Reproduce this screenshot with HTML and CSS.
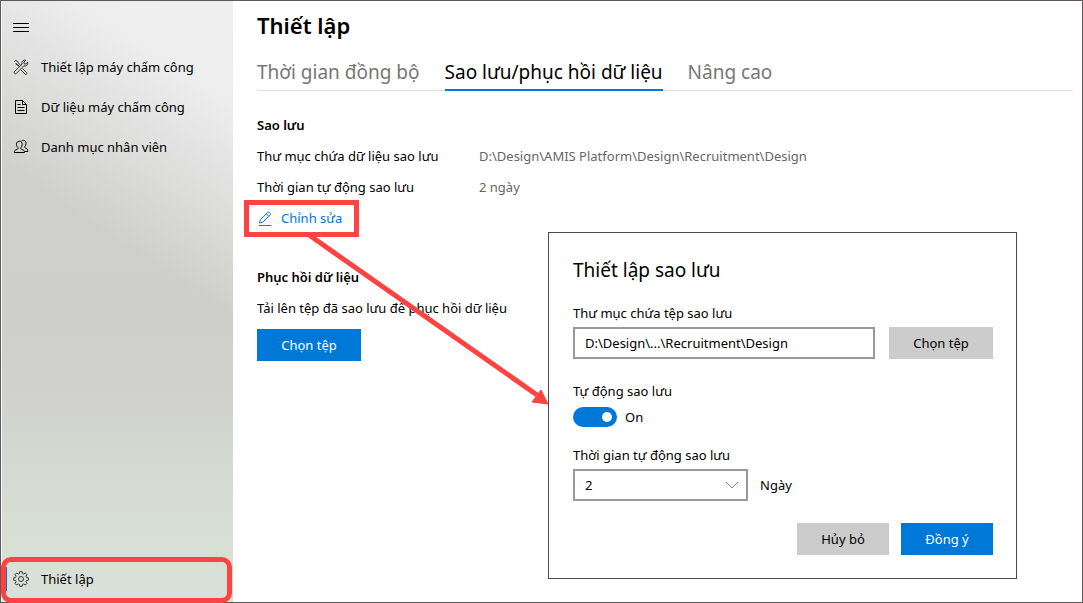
FILE: index.html
```html
<!DOCTYPE html>
<html lang="vi">
<head>
  <meta charset="UTF-8">
  <meta name="viewport" content="width=device-width, initial-scale=1.0">
  <title>Thiết lập</title>
  <link rel="stylesheet" href="styles.css">
</head>
<body>
  <div class="window">
    <aside class="sidebar">
      <button class="menu-btn" type="button" aria-label="Menu">
        <svg class="icon" viewBox="0 0 16 16"><path d="M0 4.5h16M0 8.5h16M0 12.5h16"/></svg>
      </button>
      <nav class="side-nav">
        <a class="side-link" href="#">
          <svg class="icon thin" viewBox="0 0 16 16">
            <path d="M1.3 2.8 2.7 1.4 5 2.7l.3 1.2 2.6 2.6M6.7 7.6 4 5 2.7 4.8z"/>
            <path d="M9.3 9.4 13.6 13.7a1 1 0 0 1-1.5 1.5L7.9 10.9"/>
            <path d="M14.7 3.2a3 3 0 0 1-3.9 3.7L3.4 14.4a1.3 1.3 0 0 1-1.9-1.9L9 5.1a3 3 0 0 1 3.7-3.9L11 3v1.9h1.9z"/>
          </svg>
          Thiết lập máy chấm công
        </a>
        <a class="side-link" href="#">
          <svg class="icon" viewBox="0 0 16 16">
            <path d="M2.5 1.5h7l4 4v9h-11zM9.5 1.5v4h4M4.5 5.5h3M4.5 8.5h7M4.5 11.5h7"/>
          </svg>
          Dữ liệu máy chấm công
        </a>
        <a class="side-link" href="#">
          <svg class="icon" viewBox="0 0 16 16">
            <path d="M6.3 2.2c1.8 0 2.9 1.3 2.9 3.2 0 1.5-.6 2.5-1.4 3.3-.3.8 0 1.3.8 1.6l1.6.7c1 .5 1.3 1.1 1.3 2.5H1.3c0-1.4.3-2 1.3-2.5l1.6-.7c.8-.3 1.1-.8.8-1.6-.8-.8-1.5-1.8-1.5-3.3 0-1.9 1-3.2 2.8-3.2z"/>
            <path d="M8.4 2.2c.5-.6 1.2-.9 2-.9 1.7 0 2.7 1.2 2.7 3 0 1.5-.6 2.5-1.3 3.2-.3.8 0 1.3.7 1.6l1.2.5c.9.5 1.1 1.2 1.1 2.9h-3"/>
          </svg>
          Danh mục nhân viên
        </a>
      </nav>
      <a class="side-link active" href="#">
        <svg class="icon thin" viewBox="0 0 16 16">
          <path d="M6.8.7h2.4l.4 1.9 1.1.5 1.7-1.1 1.6 1.6-1.1 1.7.5 1.1 1.9.4v2.4l-1.9.4-.5 1.1 1.1 1.7-1.6 1.6-1.7-1.1-1.1.5-.4 1.9H6.8l-.4-1.9-1.1-.5L3.6 14 2 12.4l1.1-1.7-.5-1.1L.7 9.2V6.8l1.9-.4.5-1.1L2 3.6 3.6 2l1.7 1.1 1.1-.5z"/>
          <circle cx="8" cy="8" r="2.5"/>
        </svg>
        Thiết lập
      </a>
    </aside>

    <main class="content">
      <h1>Thiết lập</h1>
      <nav class="tabs">
        <a class="tab" href="#">Thời gian đồng bộ</a>
        <a class="tab selected" href="#">Sao lưu/phục hồi dữ liệu</a>
        <a class="tab" href="#">Nâng cao</a>
      </nav>

      <section>
        <h2>Sao lưu</h2>
        <dl class="info">
          <dt>Thư mục chứa dữ liệu sao lưu</dt>
          <dd>D:\Design\AMIS Platform\Design\Recruitment\Design</dd>
          <dt>Thời gian tự động sao lưu</dt>
          <dd>2 ngày</dd>
        </dl>
        <a class="edit-link" href="#">
          <svg class="icon" viewBox="0 0 16 16">
            <path d="M2 14.5h12.5M2.5 12l.8-3.2 7.3-7.3a1.3 1.3 0 0 1 1.9 0l.6.6a1.3 1.3 0 0 1 0 1.9l-7.4 7.3zM9.3 2.8l2.5 2.5"/>
          </svg>
          Chỉnh sửa
        </a>
      </section>

      <section>
        <h2>Phục hồi dữ liệu</h2>
        <p>Tải lên tệp đã sao lưu để phục hồi dữ liệu</p>
        <button class="btn primary wide restore" type="button">Chọn tệp</button>
      </section>
    </main>

    <!-- arrow from the edit link to the dialog -->
    <svg class="arrow" viewBox="0 0 240 170">
      <path d="M1 0 229 160" stroke="#ff4343" stroke-width="5"/>
      <path d="M240 169 224 167 233 155z" fill="#ff4343" stroke="#ff4343" stroke-width="1"/>
    </svg>

    <form class="dialog" role="dialog" aria-labelledby="dialog-title">
      <h3 id="dialog-title">Thiết lập sao lưu</h3>
      <label for="folder">Thư mục chứa tệp sao lưu</label>
      <div class="folder-row">
        <input class="field" id="folder" type="text" value="D:\Design\...\Recruitment\Design">
        <button class="btn wide" type="button">Chọn tệp</button>
      </div>
      <label for="auto">Tự động sao lưu</label>
      <div class="toggle-row">
        <input class="toggle" id="auto" type="checkbox" role="switch" checked>
        <span>On</span>
      </div>
      <label for="days">Thời gian tự động sao lưu</label>
      <div class="days-row">
        <div class="select-wrap">
          <select class="field" id="days">
            <option>1</option>
            <option selected>2</option>
            <option>3</option>
          </select>
          <svg class="chevron" viewBox="0 0 14 8"><path d="M1 1l6 6 6-6"/></svg>
        </div>
        <span>Ngày</span>
      </div>
      <div class="actions">
        <button class="btn" type="button">Hủy bỏ</button>
        <button class="btn primary" type="submit">Đồng ý</button>
      </div>
    </form>
  </div>
</body>
</html>
```

FILE: styles.css
```css
* {
  box-sizing: border-box;
}

body {
  margin: 0;
  font-family: "Noto Sans", "Open Sans", sans-serif;
  font-size: 13px;
  line-height: 20px;
  color: #000;
  background: #fff;
}

h1, h2, h3, p, dl, dd {
  margin: 0;
}

a {
  color: inherit;
  text-decoration: none;
}

button, input, select {
  font: inherit;
  color: inherit;
}

.window {
  position: relative;
  display: flex;
  min-height: 100vh;
  padding-left: 1px;
  border: 1px solid #5b595a;
}

.icon {
  flex: none;
  width: 16px;
  height: 16px;
  fill: none;
  stroke: currentColor;
  stroke-width: 1;
}

.icon.thin {
  stroke: #222;
  stroke-width: 0.9;
}

/* sidebar */
.sidebar {
  display: flex;
  flex-direction: column;
  flex: none;
  width: 231px;
  padding: 6px 0 3px;
  background:
    linear-gradient(213deg, #efefef 0, #ededed 14%, #e3e3e3 23%, rgba(208, 208, 205, 0) 42%),
    linear-gradient(180deg, #d0d0cd 0, #cececa 54%, #d1d2cd 67%, #d5dbd2 80%, #d8e0d6 92%, #d9e0d8 100%);
}

.menu-btn {
  display: flex;
  align-items: center;
  height: 40px;
  padding: 0 11px;
  border: 0;
  background: none;
}

.side-nav {
  flex: 1;
}

.side-link {
  display: flex;
  align-items: center;
  gap: 12px;
  height: 40px;
  padding: 0 11px;
}

.side-link.active {
  position: relative;
}

.side-link.active::before {
  content: "";
  position: absolute;
  left: 4px;
  top: 8px;
  width: 1px;
  height: 24px;
  background: #0078d7;
}

.side-link.active::after {
  content: "";
  position: absolute;
  inset: -2px 1px -4px -1px;
  border: 5px solid #ff4343;
  border-radius: 10px;
}

/* main area */
.content {
  flex: 1;
  padding: 8px 9px 24px 24px;
}

h1 {
  font-size: 22px;
  font-weight: 600;
  line-height: 32px;
}

.tabs {
  display: flex;
  gap: 25px;
  height: 34px;
  margin: 16px 0 19px;
  border-bottom: 1px solid #dedede;
}

.tab {
  height: 34px;
  font-size: 19px;
  line-height: 30px;
  color: #767676;
}

.tab.selected {
  color: #000;
  border-bottom: 2px solid #0078d7;
}

section {
  margin-bottom: 28px;
  line-height: 31px;
}

h2 {
  font-size: 13px;
  font-weight: 600;
}

.info {
  display: grid;
  grid-template-columns: 222px 1fr;
}

.info dd {
  color: #666;
}

.edit-link {
  position: relative;
  display: inline-flex;
  align-items: center;
  gap: 8px;
  height: 31px;
  vertical-align: top;
  color: #0078d7;
}

.edit-link::after {
  content: "";
  position: absolute;
  inset: -3px -17px -3px -13px;
  border: 5px solid #ff4343;
}

.btn {
  min-width: 92px;
  height: 32px;
  padding: 0 8px;
  border: 0;
  background: #ccc;
}

.btn.primary {
  color: #fff;
  background: #0078d7;
}

.btn.wide {
  min-width: 104px;
}

.restore {
  display: block;
  margin-top: 5px;
}

.arrow {
  position: absolute;
  left: 307px;
  top: 234px;
  width: 240px;
  height: 170px;
  fill: none;
}

/* backup dialog */
.dialog {
  position: absolute;
  left: 547px;
  top: 231px;
  width: 469px;
  padding: 24px 23px 23px 24px;
  border: 1px solid #4a4a4a;
  background: #fff;
}

.dialog h3 {
  margin-bottom: 20px;
  font-size: 19px;
  font-weight: 400;
  line-height: 26px;
}

.dialog label {
  display: block;
}

.field {
  width: 100%;
  height: 32px;
  padding: 0 10px;
  border: 2px solid #999;
  border-radius: 0;
  background: #fff;
  appearance: none;
}

.folder-row {
  display: flex;
  gap: 14px;
  margin: 4px 0 22px;
}

.folder-row .field {
  flex: 1;
  min-width: 0;
}

.toggle-row {
  display: flex;
  align-items: center;
  gap: 8px;
  margin: 6px 0 18px;
}

.toggle {
  position: relative;
  width: 44px;
  height: 20px;
  margin: 0;
  border-radius: 10px;
  background: #999;
  appearance: none;
}

.toggle::before {
  content: "";
  position: absolute;
  left: 5px;
  top: 5px;
  width: 10px;
  height: 10px;
  border-radius: 50%;
  background: #fff;
}

.toggle:checked {
  background: #0078d7;
}

.toggle:checked::before {
  left: 29px;
}

.days-row {
  display: flex;
  align-items: center;
  gap: 12px;
  margin: 4px 0 22px;
}

.select-wrap {
  position: relative;
  width: 175px;
}

.select-wrap .field {
  display: block;
}

.chevron {
  position: absolute;
  right: 9px;
  top: 12px;
  width: 14px;
  height: 8px;
  fill: none;
  stroke: #888;
  pointer-events: none;
}

.actions {
  display: flex;
  justify-content: flex-end;
  gap: 12px;
}
```
